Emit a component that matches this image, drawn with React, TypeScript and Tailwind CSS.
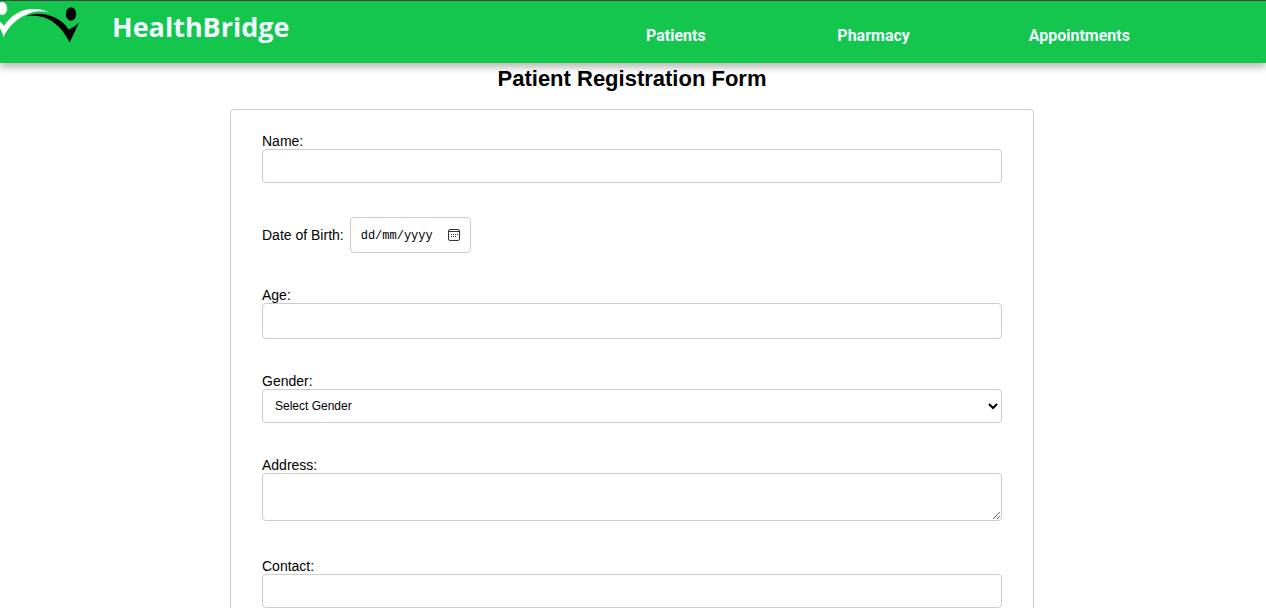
import React from 'react';

const control = 'block w-full rounded border border-[#ccc] bg-white px-2 text-xs text-black';

const links = ['Patients', 'Pharmacy', 'Appointments'];

function Logo() {
  return (
    <svg viewBox="0 1 80 44" className="block h-11 w-20 shrink-0" aria-hidden="true">
      <g fill="#fff">
        <ellipse cx="2.2" cy="8.5" rx="5" ry="6.5" />
        <path d="M-1 21C1 22 3 24 4 26C11 15 21 9 33 9C40 9 45 10 48.500 12.500C41 10.500 34 11 28 14C17 18 9 26 3.500 37C2 32 0 28-1 26Z" />
      </g>
      <g fill="#000">
        <ellipse cx="71" cy="14" rx="5.200" ry="6.700" />
        <path d="M26 16.500C32 13.500 40 13 48 15C58 18 65 23 68.500 29.500C72 28 76 26 79 22.500C76 29 73 36 69.500 42.500C65 33 58 24 48 19C41 16 33 15 26 16.500Z" />
      </g>
    </svg>
  );
}

function CalendarIcon() {
  return (
    <svg viewBox="0 0 12 12" className="block size-3" fill="none" stroke="#333" aria-hidden="true">
      <rect x="0.5" y="0.5" width="11" height="11" rx="1.5" />
      <path d="M0.500 2.500H11.500" />
      <path d="M3 5.500H4M5 5.500H6M7 5.500H8M9 5.500H10M3 7.500H4M5 7.500H6M7 7.500H8" />
    </svg>
  );
}

function Field({ id, label, children }: { id: string; label: string; children: React.ReactNode }) {
  return (
    <div>
      <label htmlFor={id} className="block">{label}</label>
      {children}
    </div>
  );
}

export default function App() {
  return (
    <div className="bg-white font-['Liberation_Sans',Arial,sans-serif] text-black">
      <header className="relative flex h-[63px] border-t border-[#444] bg-[#15c64e] shadow-[0_4px_8px_rgba(0,0,0,0.3)]">
        <Logo />
        <a href="#home" className="ml-8 pt-1 font-['Trebuchet_MS','Open_Sans',sans-serif] text-[27px] leading-[44px] font-bold text-[#f0f8ff]">
          HealthBridge
        </a>
        <nav className="mr-[46px] ml-auto grid w-[574px] grid-cols-3 items-center pt-2 font-[Roboto,sans-serif] text-base font-bold text-[#f0f8ff]">
          {links.map((label) => (
            <a key={label} href={'#' + label.toLowerCase()}>{label}</a>
          ))}
        </nav>
      </header>

      <main className="pr-0.5 pb-8">
        <h1 className="pt-0.5 text-center text-[22px] leading-7 font-bold">Patient Registration Form</h1>
        <form className="mx-auto mt-4 flex max-w-[804px] flex-col gap-[34px] rounded border border-[#ccc] px-[31px] pt-[23px] pb-8 text-sm leading-4">
          <Field id="name" label="Name:">
            <input id="name" type="text" className={control + ' h-[34px]'} />
          </Field>
          <div className="flex items-center gap-1.5">
            <label htmlFor="dob">Date of Birth:</label>
            <div className="flex h-9 w-[121px] items-center justify-between rounded border border-[#ccc] px-2.5">
              <input
                id="dob"
                type="text"
                placeholder="dd/mm/yyyy"
                className="w-20 min-w-0 bg-white pt-0.5 font-['Liberation_Mono',monospace] text-xs text-black placeholder:text-black"
              />
              <button type="button" aria-label="Open calendar"><CalendarIcon /></button>
            </div>
          </div>
          <Field id="age" label="Age:">
            <input id="age" type="number" className={control + ' h-9'} />
          </Field>
          <Field id="gender" label="Gender:">
            <select id="gender" className={control + ' h-[34px]'} defaultValue="">
              <option value="">Select Gender</option>
              <option>Male</option>
              <option>Female</option>
              <option>Other</option>
            </select>
          </Field>
          <Field id="address" label="Address:">
            <textarea id="address" className={control + ' mb-[3px] h-12'} />
          </Field>
          <Field id="contact" label="Contact:">
            <input id="contact" type="tel" className={control + ' h-[34px]'} />
          </Field>
        </form>
      </main>
    </div>
  );
}
